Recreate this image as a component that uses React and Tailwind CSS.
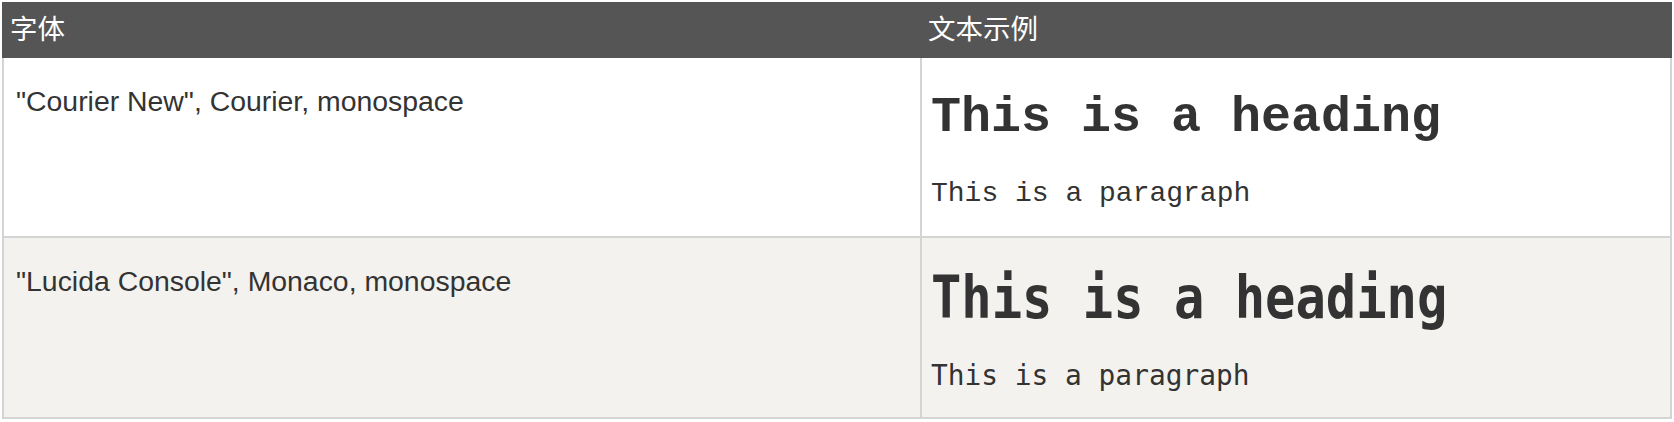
export default function App() {
  return (
    <div className="ml-[2px] mt-[2px] w-[1670px] text-[#333] font-['Liberation_Sans','Noto_Sans_CJK_SC',sans-serif]">
      <div className="flex h-[56px] items-center bg-[#555555] text-[27.5px] text-white">
        <div className="w-[920px] pl-[8px]">字体</div>
        <div className="pl-[6px]">文本示例</div>
      </div>
      <div className="border-x-2 border-b-2 border-[#d4d4d4]">
        <div className="flex h-[178px] bg-white">
          <div className="w-[918px] border-r-2 border-[#d4d4d4] pl-[12px] pt-[25px] text-[28.4px] leading-[36px]">
            "Courier New", Courier, monospace
          </div>
          <div className="flex flex-col pl-[9px] pt-[31px] font-['Liberation_Mono','Courier_New',monospace]">
            <div className="whitespace-nowrap text-[50px] font-bold leading-[57px]">This is a heading</div>
            <div className="mt-[30px] whitespace-nowrap text-[28px] leading-[36px]">This is a paragraph</div>
          </div>
        </div>
        <div className="flex h-[181px] border-t-2 border-[#d4d4d4] bg-[#f3f2ee]">
          <div className="w-[918px] border-r-2 border-[#d4d4d4] pl-[12px] pt-[25px] text-[28.4px] leading-[36px]">
            "Lucida Console", Monaco, monospace
          </div>
          <div className="flex flex-col pl-[9px] pt-[25px] font-['DejaVu_Sans_Mono',monospace]">
            <div className="h-[69px] whitespace-nowrap">
              <span className="inline-block origin-left scale-x-[0.855] text-[59px] font-bold leading-[69px]">This is a heading</span>
            </div>
            <div className="mt-[25px] h-[36px] whitespace-nowrap">
              <span className="inline-block origin-left scale-x-[0.96] text-[29px] leading-[36px]">This is a paragraph</span>
            </div>
          </div>
        </div>
      </div>
    </div>
  );
}
